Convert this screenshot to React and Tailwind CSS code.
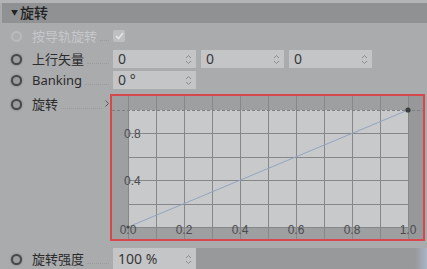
const FONT = { fontFamily: '"Noto Sans", "Noto Sans CJK SC", sans-serif' };

function Spinner() {
  return (
    <svg width="7" height="11" viewBox="0 0 7 11" className="shrink-0">
      <path d="M1 4 L3.5 1.5 L6 4" fill="none" stroke="#8a8b8d" strokeWidth="1" />
      <path d="M1 7 L3.5 9.5 L6 7" fill="none" stroke="#8a8b8d" strokeWidth="1" />
    </svg>
  );
}

function Field({ value, h = 'h-[18px]' }) {
  return (
    <div className={`flex w-[83px] ${h} items-center justify-between bg-[#c4c5c7] pl-[5px] pr-[4px] text-[14px] text-[#383838]`}>
      <span className="leading-none">{value}</span>
      <Spinner />
    </div>
  );
}

function Radio({ disabled }) {
  return (
    <div
      className={
        disabled
          ? 'h-[11px] w-[11px] shrink-0 rounded-full border-2 border-[#b9babc] bg-[#acadaf]'
          : 'h-[11px] w-[11px] shrink-0 rounded-full border-2 border-[#47484a] bg-[#9c9d9f] shadow-[0_0_2px_#6a6b6d]'
      }
    />
  );
}

function Label({ text, disabled, arrow }) {
  return (
    <div className="ml-[10px] flex w-[80px] shrink-0 items-center">
      <span className={`whitespace-nowrap text-[13px] leading-none ${disabled ? 'text-[#c6c7c9]' : 'text-[#2c2c2c]'}`}>
        {text}
      </span>
      <div className="mx-[3px] mt-[8px] flex-1 border-b border-dotted border-[#9a9b9d]" />
      {arrow && (
        <svg width="4" height="7" viewBox="0 0 4 7" className="mb-[2px] mr-[3px] shrink-0">
          <path d="M0.5 0.5 L3.5 3.5 L0.5 6.5" fill="none" stroke="#58595b" strokeWidth="1" />
        </svg>
      )}
    </div>
  );
}

function Chart() {
  const vx = Array.from({ length: 11 }, (_, i) => 16 + i * 28);
  const hy = Array.from({ length: 5 }, (_, i) => 14 + (i + 1) * 23.4);
  const xl = ['0.0', '0.2', '0.4', '0.6', '0.8', '1.0'];
  return (
    <div className="ml-[-2px] h-[147px] w-[315px] border-2 border-[#d5484e]">
      <svg width="311" height="143" viewBox="0 0 311 143" className="block">
        <rect x="0" y="0" width="311" height="143" fill="#9e9fa1" />
        <rect x="16" y="14" width="280" height="117" fill="#c8c9cb" />
        <rect x="296" y="0" width="15" height="143" fill="#97989a" />
        {vx.map((x) => (
          <line key={x} x1={x + 0.5} y1="0" x2={x + 0.5} y2="143" stroke="#86878a" strokeWidth="1" />
        ))}
        {hy.map((y) => (
          <line key={y} x1="16" y1={Math.round(y) + 0.5} x2="296" y2={Math.round(y) + 0.5} stroke="#86878a" strokeWidth="1" />
        ))}
        <line x1="0" y1="14.5" x2="311" y2="14.5" stroke="#7e7f82" strokeWidth="1" strokeDasharray="3 2" />
        <line x1="16" y1="131" x2="296" y2="14" stroke="#93a5bd" strokeWidth="1" />
        <circle cx="296" cy="14" r="2.6" fill="#3b3c3e" />
        <circle cx="16" cy="131" r="1.6" fill="#4a4b4d" />
        <g fill="#4c4d4f" fontSize="12" fontFamily='"Liberation Sans", sans-serif'>
          <text x="12" y="42">0.8</text>
          <text x="12" y="89">0.4</text>
          {xl.map((t, i) => (
            <text key={t} x={16 + i * 56} y="138" textAnchor="middle">
              {t}
            </text>
          ))}
        </g>
      </svg>
    </div>
  );
}

export default function App() {
  return (
    <div className="h-[269px] w-[427px] overflow-hidden bg-[#aaabad]" style={FONT}>
      <div className="h-[3px] bg-[#b3b4b6]" />
      <div className="ml-[2px] flex h-[20px] items-center bg-[#8f9193] pl-[9px] text-[14px] text-[#222]">
        <span className="mr-[2px] text-[7px]">▼</span>
        <span className="font-medium leading-none">旋转</span>
      </div>

      <div className="mt-[4px] flex h-[18px] items-center pl-[11px]">
        <Radio disabled />
        <Label text="按导轨旋转" disabled />
        <div className="ml-[1px] flex h-[12px] w-[12px] items-center justify-center rounded-[2px] bg-[#bebfc1]">
          <svg width="9" height="8" viewBox="0 0 9 8">
            <path d="M1 4 L3.5 6.5 L8 1" fill="none" stroke="#e4e5e7" strokeWidth="1.6" />
          </svg>
        </div>
      </div>

      <div className="mt-[5px] flex h-[18px] items-center pl-[11px]">
        <Radio />
        <Label text="上行矢量" />
        <div className="ml-[1px] flex gap-[5px]">
          <Field value="0" />
          <Field value="0" />
          <Field value="0" />
        </div>
      </div>

      <div className="mt-[3px] flex h-[18px] items-center pl-[11px]">
        <Radio />
        <Label text="Banking" />
        <div className="ml-[1px]">
          <Field value="0 °" />
        </div>
      </div>

      <div className="mt-[5px] flex items-start pl-[11px]">
        <div className="mt-[4px] flex items-center">
          <Radio />
          <Label text="旋转" arrow />
        </div>
        <Chart />
      </div>

      <div className="mt-[7px] flex h-[22px] items-center pl-[11px]">
        <Radio />
        <Label text="旋转强度" />
        <div className="ml-[1px] flex flex-1 items-stretch self-stretch">
          <Field value="100 %" h="h-[22px]" />
          <div className="flex-1 bg-gradient-to-r from-[#98999b] via-[#98999b] via-[95%] to-[#aab5c6]" />
        </div>
      </div>
    </div>
  );
}
